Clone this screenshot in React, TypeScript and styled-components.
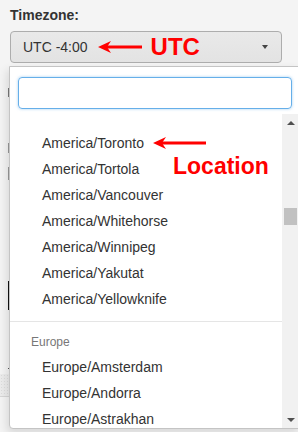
import React from 'react';
import styled, { createGlobalStyle } from 'styled-components';

const GlobalStyle = createGlobalStyle`
  html, body {
    margin: 0;
    padding: 0;
    background: #f4f4f4;
  }
  body {
    font-family: "Liberation Sans", Arial, sans-serif;
    color: #333;
  }
`;

// 페이지 전체
const Page = styled.div`
  position: relative;
  width: 298px;
  height: 432px;
  overflow: hidden;
  box-sizing: border-box;
  padding: 5px 0 0 10px;
`;

const Label = styled.div`
  font-size: 14px;
  font-weight: bold;
  line-height: 20px;
  margin-bottom: 6px;
`;

const SelectButton = styled.div`
  box-sizing: border-box;
  width: 272px;
  height: 32px;
  display: flex;
  align-items: center;
  padding: 0 13px 0 12px;
  border: 1px solid #adadad;
  border-radius: 4px;
  background: linear-gradient(#e9e9e9, #e3e3e3);
  font-size: 14px;
`;

const Value = styled.span`
  color: #333;
`;

const Note = styled.span<{ $size: number }>`
  color: #ff0000;
  font-weight: bold;
  font-size: ${(p) => p.$size}px;
  line-height: 1;
`;

const Caret = styled.span`
  margin-left: auto;
  width: 0;
  height: 0;
  border-left: 3.5px solid transparent;
  border-right: 3.5px solid transparent;
  border-top: 4px solid #444;
`;

// 드롭다운 뒤에 가려진 부분
const Backdrop = styled.div`
  display: flex;
  flex-direction: column;
  margin-left: -10px;
  width: 9px;
`;

const Mark = styled.div<{ $h: number; $top: number; $bg: string; $w?: number }>`
  height: ${(p) => p.$h}px;
  margin-top: ${(p) => p.$top}px;
  width: ${(p) => p.$w ?? 9}px;
  align-self: flex-end;
  background: ${(p) => p.$bg};
`;

const Shelf = styled.div`
  margin-top: 5px;
  height: 22px;
  background: radial-gradient(#dcdcdc 0.6px, #ececec 0.8px) 0 0 / 3px 3px;
  border-bottom: 1px solid #d6d6d6;
`;

const Dropdown = styled.div`
  position: absolute;
  top: 66px;
  left: 9px;
  width: 291px;
  height: 363px;
  box-sizing: border-box;
  display: flex;
  flex-direction: column;
  background: #fff;
  border: 1px solid #c4c4c4;
  border-radius: 0 0 0 4px;
  box-shadow: -2px 4px 10px rgba(0, 0, 0, 0.12);
`;

const SearchWrap = styled.div`
  padding: 10px 7px 0 8px;
`;

const SearchInput = styled.div`
  height: 32px;
  box-sizing: border-box;
  border: 1px solid #66afe9;
  border-radius: 4px;
  box-shadow: 0 0 3px rgba(102, 175, 233, 0.6);
`;

const ListArea = styled.div`
  margin-top: 5px;
  flex: 1;
  display: flex;
  min-height: 0;
`;

const List = styled.div`
  flex: 1;
  overflow: hidden;
  padding-top: 16px;
`;

const Item = styled.div`
  height: 26px;
  line-height: 26px;
  padding-left: 32px;
  font-size: 14px;
  color: #333;
  display: flex;
  align-items: center;
  white-space: nowrap;
`;

const Divider = styled.div`
  margin-top: 9px;
  height: 1px;
  background: #e5e5e5;
`;

const GroupHeader = styled.div`
  padding: 12px 0 4px 21px;
  line-height: 16px;
  font-size: 12px;
  color: #777;
`;

const Scrollbar = styled.div`
  width: 17px;
  background: #f1f1f1;
  display: flex;
  flex-direction: column;
  align-items: center;
`;

const ScrollArrow = styled.div<{ $up?: boolean }>`
  height: 17px;
  width: 17px;
  display: flex;
  align-items: center;
  justify-content: center;
  margin-top: ${(p) => (p.$up ? 0 : 'auto')};

  &::after {
    content: '';
    width: 0;
    height: 0;
    border-left: 4px solid transparent;
    border-right: 4px solid transparent;
    ${(p) =>
      p.$up ? 'border-bottom: 4px solid #505050;' : 'border-top: 4px solid #505050;'}
  }
`;

const Thumb = styled.div`
  margin-top: 77px;
  width: 13px;
  height: 17px;
  background: #c1c1c1;
`;

const LocationNote = styled(Note)`
  position: absolute;
  left: 163px;
  top: 88px;
`;

const Arrow: React.FC<{ width: number; gap: number }> = ({ width, gap }) => (
  <svg
    width={width}
    height={14}
    viewBox={`0 0 ${width} 14`}
    style={{ marginLeft: gap, flexShrink: 0 }}
  >
    <line x1={6} y1={7} x2={width} y2={7} stroke="#ff0000" strokeWidth={3} />
    <polygon points="0,7 13,1 9,7 13,13" fill="#ff0000" />
  </svg>
);

const america = [
  'America/Toronto',
  'America/Tortola',
  'America/Vancouver',
  'America/Whitehorse',
  'America/Winnipeg',
  'America/Yakutat',
  'America/Yellowknife',
];

const europe = ['Europe/Amsterdam', 'Europe/Andorra', 'Europe/Astrakhan'];

const App: React.FC = () => {
  return (
    <Page>
      <GlobalStyle />
      <Label>Timezone:</Label>
      <SelectButton>
        <Value>UTC -4:00</Value>
        <Arrow width={44} gap={10} />
        <Note $size={24} style={{ marginLeft: 9 }}>
          UTC
        </Note>
        <Caret />
      </SelectButton>

      <Backdrop>
        <Mark $h={9} $top={25} $bg="#777" $w={1} />
        <Mark $h={10} $top={46} $bg="#999" $w={1} />
        <Mark $h={13} $top={14} $bg="#999" $w={1} />
        <Mark $h={29} $top={101} $bg="#111" $w={1} />
        <Mark $h={1} $top={58} $bg="#555" $w={1} />
        <Shelf />
      </Backdrop>

      <Dropdown>
        <SearchWrap>
          <SearchInput />
        </SearchWrap>
        <ListArea>
          <List>
            {america.map((name, i) => (
              <Item key={name}>
                {name}
                {i === 0 && <Arrow width={53} gap={9} />}
              </Item>
            ))}
            <Divider />
            <GroupHeader>Europe</GroupHeader>
            {europe.map((name) => (
              <Item key={name}>{name}</Item>
            ))}
          </List>
          <Scrollbar>
            <ScrollArrow $up />
            <Thumb />
            <ScrollArrow />
          </Scrollbar>
        </ListArea>
        <LocationNote $size={23}>Location</LocationNote>
      </Dropdown>
    </Page>
  );
};

export default App;
